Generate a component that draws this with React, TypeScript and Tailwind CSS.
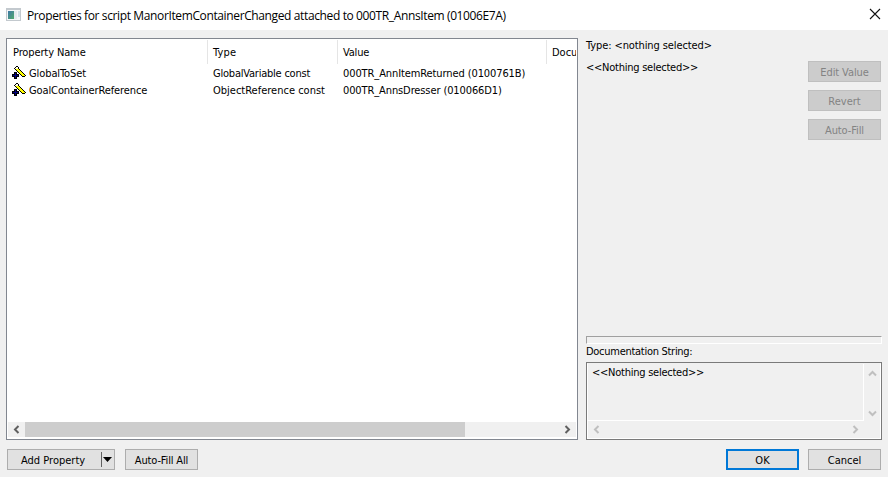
import React from "react";

const UI = "font-['DejaVu_Sans_Condensed','DejaVu_Sans',sans-serif] [font-stretch:condensed]";

function Chevron({ d, color }: { d: string; color: string }) {
  return (
    <svg width="9" height="9" viewBox="0 0 9 9" className="block">
      <path d={d} fill="none" stroke={color} strokeWidth="2" />
    </svg>
  );
}

const LEFT = "M6.5 1L3 4.5L6.5 8";
const RIGHT = "M2.5 1L6 4.5L2.5 8";
const UP = "M1 6.5L4.5 3L8 6.5";
const DOWN = "M1 2.5L4.5 6L8 2.5";

const wandRows = [2, 3, 4, 5, 6, 7, 8, 9];

function Wand() {
  return (
    <svg width="14" height="14" viewBox="0 0 14 14" className="-mt-[2px] block shrink-0" shapeRendering="crispEdges">
      <path d="M4 0h2v1h-2zM3 1h1v1h-1zM6 1h1v1h-1zM2 2h1v1h-1zM10 10h3v1h-3z" fill="#000" />
      {wandRows.map((y) => (
        <g key={y}>
          <rect x={y} y={y} width="1" height="1" fill="#000" />
          <rect x={y + 1} y={y} width="3" height="1" fill={y === 2 ? "#fffbd0" : "#ffff00"} />
          <rect x={y + 4} y={y} width="1" height="1" fill="#000" />
        </g>
      ))}
      <path d="M2 6h3v2h2v3h-2v2h-3v-2h-2v-3h2z" fill="#000" />
      <path d="M3 7h1v2h2v1h-2v2h-1v-2h-2v-1h2z" fill="#000080" />
    </svg>
  );
}

function Button({ children, className }: { children: React.ReactNode; className: string }) {
  return (
    <button className={`flex h-[21px] w-[73px] items-center justify-center border ${className}`}>
      <span>{children}</span>
    </button>
  );
}

const disabled = "border-[#bfbfbf] bg-[#cccccc] pt-px text-[#838383]";
const normal = "border-[#adadad] bg-[#e1e1e1] pt-px";

export default function App() {
  return (
    <div className={`flex h-[477px] w-[888px] flex-col overflow-hidden bg-[#f0f0f0] text-[11px] leading-[17px] whitespace-nowrap text-black ${UI}`}>
      <header className="flex h-[30px] items-center bg-white pr-[7px] pl-[6px]">
        <svg width="15" height="13" viewBox="0 0 15 13" className="-mt-[2px] block">
          <defs>
            <linearGradient id="pane" x1="0" y1="0" x2="1" y2="1">
              <stop offset="0" stopColor="#3f78a8" />
              <stop offset="1" stopColor="#4faa6c" />
            </linearGradient>
          </defs>
          <rect width="15" height="13" fill="#c3c9ce" />
          <rect x="1" y="2" width="13" height="10" fill="#f4f6f8" />
          <rect x="2" y="3" width="6" height="8" fill="url(#pane)" />
          <rect x="8" y="3" width="3" height="8" fill="#e3ebee" />
          <rect x="12" y="3" width="2" height="6" fill="#cfe0e6" />
        </svg>
        <span className="ml-[6px] grow font-['Open_Sans',sans-serif] text-[12px] tracking-[-0.375px] [font-stretch:normal]">
          <span>Properties for script ManorItemContainerChanged attached to 000TR_AnnsItem (01006E7A)</span>
        </span>
        <svg width="12" height="12" viewBox="0 0 12 12" className="-mt-[2px] block">
          <path d="M1 1L11 11M11 1L1 11" stroke="#111" strokeWidth="1.1" />
        </svg>
      </header>

      <div className="flex pt-2 pl-[6px]">
        <section className="flex h-[402px] w-[572px] flex-col overflow-hidden border border-[#828790] bg-white p-px">
          <div className="mb-px flex h-[24px] shrink-0 items-stretch overflow-hidden leading-[26px]">
            <div className="w-[200px] shrink-0 border-r border-[#e5e5e5] pl-[5px] tracking-[-0.12px]"><span>Property Name</span></div>
            <div className="w-[130px] shrink-0 border-r border-[#e5e5e5] pl-[5px] tracking-[0.2px]"><span>Type</span></div>
            <div className="w-[209px] shrink-0 border-r border-[#e5e5e5] pl-[5px] tracking-[-0.2px]"><span>Value</span></div>
            <div className="shrink-0 pl-[5px]"><span>Docu</span></div>
          </div>
          <div className="flex h-[17px] items-center">
            <div className="flex w-[200px] items-center gap-[3px] pl-[4px] tracking-[-0.09px]"><Wand /><span>GlobalToSet</span></div>
            <div className="w-[130px] pl-[5px] tracking-[-0.22px]"><span>GlobalVariable const</span></div>
            <div className="pl-[5px] tracking-[-0.1px]"><span>000TR_AnnItemReturned (0100761B)</span></div>
          </div>
          <div className="flex h-[17px] items-center">
            <div className="flex w-[200px] items-center gap-[3px] pl-[4px] tracking-[-0.11px]"><Wand /><span>GoalContainerReference</span></div>
            <div className="w-[130px] pl-[5px]"><span>ObjectReference const</span></div>
            <div className="pl-[5px] tracking-[-0.11px]"><span>000TR_AnnsDresser (010066D1)</span></div>
          </div>
          <div className="mt-auto mb-px flex h-[15px] items-center bg-[#f0f0f0]">
            <div className="flex w-[17px] justify-center"><Chevron d={LEFT} color="#606060" /></div>
            <div className="h-full w-[440px] bg-[#cdcdcd]" />
            <div className="mr-[4px] ml-auto"><Chevron d={RIGHT} color="#606060" /></div>
          </div>
        </section>

        <section className="ml-2 flex h-[402px] w-[296px] flex-col">
          <div className="-mt-[1px] h-[17px] tracking-[-0.1px]"><span>Type: &lt;nothing selected&gt;</span></div>
          <div className="mt-[5px] flex justify-between">
            <div className="tracking-[-0.25px]"><span>&lt;&lt;Nothing selected&gt;&gt;</span></div>
            <div className="mt-[2px] mr-px flex flex-col gap-2">
              <Button className={`tracking-[-0.1px] ${disabled}`}>Edit Value</Button>
              <Button className={disabled}>Revert</Button>
              <Button className={`tracking-[-0.1px] ${disabled}`}>Auto-Fill</Button>
            </div>
          </div>
          <div className="mt-auto h-[8px] shrink-0 border border-t-[#a0a0a0] border-r-white border-b-white border-l-[#a0a0a0]" />
          <div className="h-[18px] shrink-0 leading-[15px] tracking-[-0.28px]"><span>Documentation String:</span></div>
          <div className="flex h-[78px] shrink-0 flex-col border border-[#7a7a7a]">
            <div className="flex grow flex-col border border-t-[#f0f0f0] border-r-white border-b-white border-l-white">
              <div className="flex h-[57px]">
                <div className="w-[276px] border-r border-b border-white pl-[4px] tracking-[-0.25px]"><span>&lt;&lt;Nothing selected&gt;&gt;</span></div>
                <div className="flex grow flex-col items-center justify-between pt-[5px] pb-[3px]">
                  <Chevron d={UP} color="#bfbfbf" />
                  <Chevron d={DOWN} color="#bfbfbf" />
                </div>
              </div>
              <div className="flex w-[276px] grow items-center justify-between pr-[4px] pl-[4px]">
                <Chevron d={LEFT} color="#bfbfbf" />
                <Chevron d={RIGHT} color="#bfbfbf" />
              </div>
            </div>
          </div>
        </section>
      </div>

      <footer className="flex pt-[9px] pr-[7px] pl-[7px]">
        <div className="flex h-[21px] w-[108px] items-center border border-[#adadad] bg-[#e1e1e1]">
          <span className="w-[93px] pt-px pl-[13px]">Add Property</span>
          <i className="h-[15px] w-px bg-[#606060]" />
          <svg width="9" height="5" viewBox="0 0 9 5" className="ml-px block"><path d="M0 0H9L4.5 5Z" /></svg>
        </div>
        <Button className={`ml-[10px] tracking-[-0.15px] ${normal}`}>Auto-Fill All</Button>
        <Button className="ml-auto border-2 border-[#0078d7] bg-[#e1e1e1] pt-px">OK</Button>
        <Button className={`ml-[9px] ${normal}`}>Cancel</Button>
      </footer>
    </div>
  );
}
